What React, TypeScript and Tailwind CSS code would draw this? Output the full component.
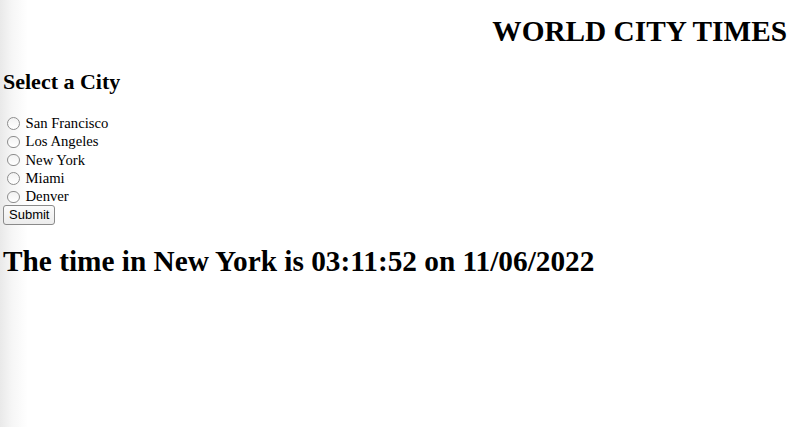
import { useState } from 'react';

const cities = ['San Francisco', 'Los Angeles', 'New York', 'Miami', 'Denver'];

export default function App() {
    const [city, setCity] = useState<string | null>(null);

    return (
        <div className="min-h-screen w-full bg-[linear-gradient(to_right,#e9e9e9_0px,#f6f6f6_12px,#ffffff_28px)] font-['Liberation_Serif','Times_New_Roman',serif] text-black">
            {/* Header */}
            <h1 className="pt-[17px] pr-[19px] text-right text-[29.3px] font-bold leading-[29px]">
                WORLD CITY TIMES
            </h1>

            {/* City picker */}
            <form className="pl-[3px]" onSubmit={(e) => e.preventDefault()}>
                <h2 className="mt-[25px] text-[22px] font-bold leading-[22px]">Select a City</h2>

                <div className="mt-[21px] flex flex-col">
                    {cities.map((name) => (
                        <label key={name} className="flex h-[18.3px] items-center text-[14.7px] leading-[18.3px]">
                            <input
                                type="radio"
                                name="city"
                                checked={city === name}
                                onChange={() => setCity(name)}
                                className="ml-[4px] mr-[6px] mt-[1px] h-[12.5px] w-[12.5px] appearance-none rounded-full border border-[#8d8d8d] bg-[linear-gradient(#f2f2f2,#ffffff)] checked:border-[4px] checked:border-[#0a64d8]"
                            />
                            <span>{name}</span>
                        </label>
                    ))}
                </div>

                <button
                    type="submit"
                    className="block h-[19.5px] rounded-[3px] border border-[#8a8a8a] bg-[linear-gradient(#fbfbfb,#ececec)] px-[5px] font-['Liberation_Sans',Arial,sans-serif] text-[13px] leading-[16px]"
                >
                    Submit
                </button>
            </form>

            {/* Result */}
            <h1 className="mt-[22px] pl-[3px] text-[29.3px] font-bold leading-[29px]">
                The time in New York is 03:11:52 on 11/06/2022
            </h1>
        </div>
    );
}
